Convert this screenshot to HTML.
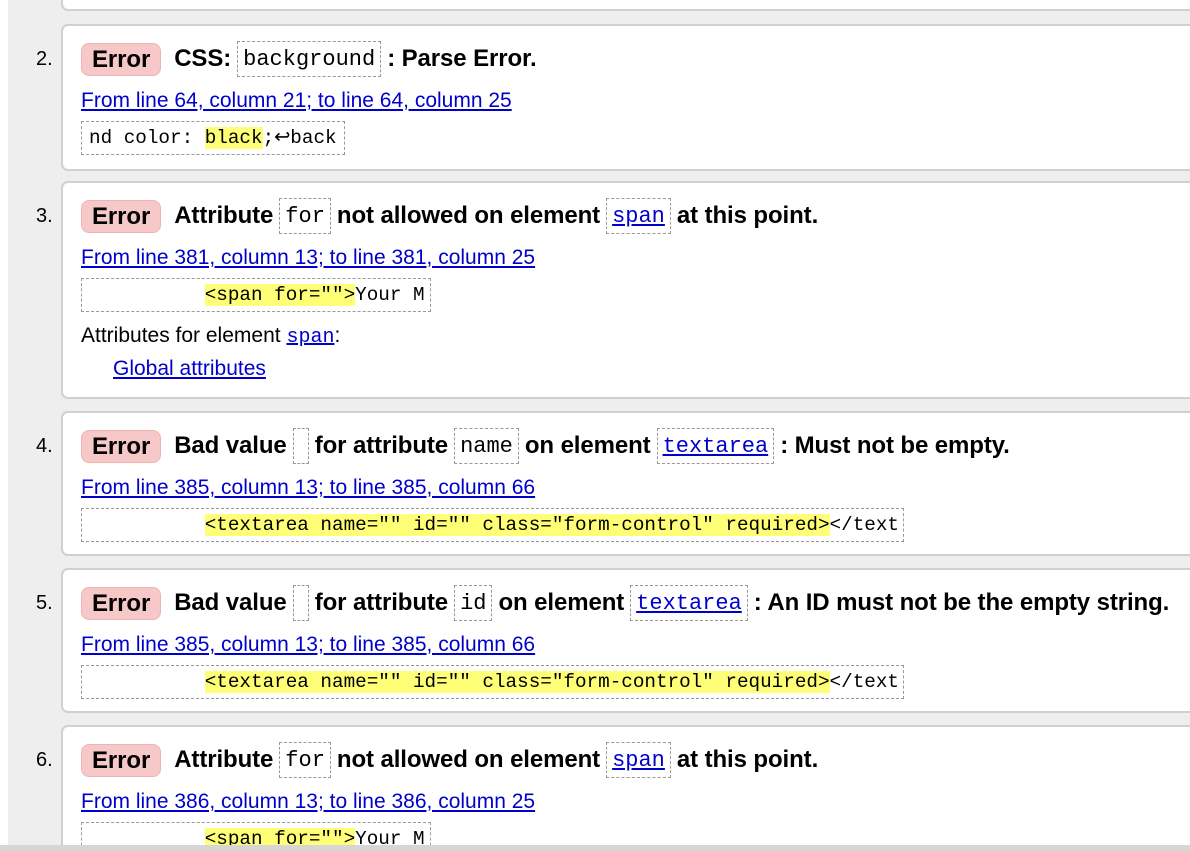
<!DOCTYPE html>
<html><head><meta charset="utf-8"><style>
*{margin:0;padding:0;box-sizing:border-box}
html,body{width:1190px;height:851px;overflow:hidden;background:#fff}
body{font-family:"Liberation Sans",Arial,sans-serif;color:#000;position:relative}
.bg{position:absolute;left:8px;top:0;width:1182px;height:851px;background:#eee}
.card{position:absolute;left:61px;width:1140px;background:#fff;border:2px solid #d0d0d0;border-radius:7px}
.num{position:absolute;left:36px;font-size:20px}
.h{position:absolute;left:18px;top:15px;height:36px;display:flex;align-items:center;font-weight:bold;font-size:24px;white-space:nowrap;letter-spacing:-0.1px}
.err{background:#f7c8c8;border:1px solid #eeb4b4;border-radius:8px;padding:0 10px;height:33px;line-height:32px;margin-right:13px}
.c{font-family:"Liberation Mono",monospace;font-weight:normal;font-size:22px;border:1px dashed #999;height:36px;line-height:36px;padding:0 5px;margin:0 6px;display:inline-block;letter-spacing:0}
.c a{color:#00c;text-decoration:underline}
.lk{position:absolute;left:18px;top:63px;font-size:21px;color:#00c;text-decoration:underline;white-space:nowrap}
.ex{position:absolute;left:18px;top:95px;height:34px;border:1px dashed #999;font-family:"Liberation Mono",monospace;font-size:19.3px;line-height:32px;padding:0 7px;white-space:pre}
.hl{background:#ffff77}
.t{position:absolute;left:18px;font-size:21px;white-space:nowrap}
.t a{color:#00c;font-family:"Liberation Mono",monospace;font-size:20px;text-decoration:underline}
.bot{position:absolute;left:0;top:845px;width:1190px;height:6px;background:#d6d6d6}
</style></head><body>
<div class="bg"></div>
<div class="card" style="top:-20px;height:31px"></div>

<div class="num" style="top:48px">2.</div>
<div class="card" style="top:24px;height:147px">
<div class="h"><span class="err">Error</span>CSS:<span class="c">background</span>: Parse Error.</div>
<div class="lk">From line 64, column 21; to line 64, column 25</div>
<div class="ex">nd color: <span class="hl">black</span>;↩back</div>
</div>

<div class="num" style="top:205px">3.</div>
<div class="card" style="top:181px;height:218px">
<div class="h"><span class="err">Error</span>Attribute<span class="c">for</span>not allowed on element<span class="c"><a>span</a></span>at this point.</div>
<div class="lk">From line 381, column 13; to line 381, column 25</div>
<div class="ex" style="width:350px">          <span class="hl">&lt;span for=""&gt;</span>Your M</div>
<div class="t" style="top:141px">Attributes for element <a>span</a>:</div>
<div class="t" style="top:174px;left:50px;color:#00c;text-decoration:underline">Global attributes</div>
</div>

<div class="num" style="top:435px">4.</div>
<div class="card" style="top:411px;height:145px">
<div class="h"><span class="err">Error</span>Bad value<span class="c" style="width:16px"></span>for attribute<span class="c">name</span>on element<span class="c"><a>textarea</a></span>: Must not be empty.</div>
<div class="lk">From line 385, column 13; to line 385, column 66</div>
<div class="ex" style="width:823px">          <span class="hl">&lt;textarea name="" id="" class="form-control" required&gt;</span>&lt;/text</div>
</div>

<div class="num" style="top:592px">5.</div>
<div class="card" style="top:568px;height:145px">
<div class="h"><span class="err">Error</span>Bad value<span class="c" style="width:16px"></span>for attribute<span class="c">id</span>on element<span class="c"><a>textarea</a></span>: An ID must not be the empty string.</div>
<div class="lk">From line 385, column 13; to line 385, column 66</div>
<div class="ex" style="width:823px">          <span class="hl">&lt;textarea name="" id="" class="form-control" required&gt;</span>&lt;/text</div>
</div>

<div class="num" style="top:749px">6.</div>
<div class="card" style="top:725px;height:160px">
<div class="h"><span class="err">Error</span>Attribute<span class="c">for</span>not allowed on element<span class="c"><a>span</a></span>at this point.</div>
<div class="lk">From line 386, column 13; to line 386, column 25</div>
<div class="ex" style="width:350px">          <span class="hl">&lt;span for=""&gt;</span>Your M</div>
</div>
<div class="bot"></div>
</body></html>
